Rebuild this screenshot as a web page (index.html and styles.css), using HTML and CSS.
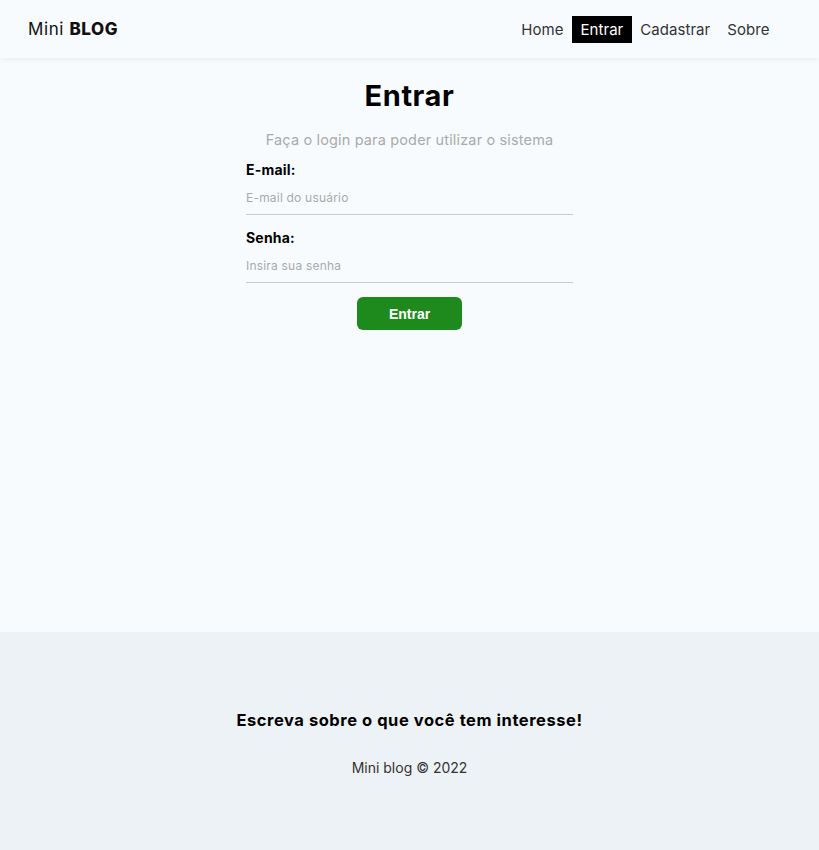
FILE: index.html
```html
<!DOCTYPE html>
<html lang="pt-BR">
<head>
<meta charset="utf-8">
<title>Mini Blog</title>
<link rel="stylesheet" href="styles.css">
</head>
<body>
<div class="app">
  <nav class="navbar">
    <a class="brand" href="#">Mini <span>BLOG</span></a>
    <ul class="links">
      <li><a href="#">Home</a></li>
      <li><a class="active" href="#">Entrar</a></li>
      <li><a href="#">Cadastrar</a></li>
      <li><a href="#">Sobre</a></li>
    </ul>
  </nav>
  <main class="container">
    <div class="login">
      <h1>Entrar</h1>
      <p class="sub">Faça o login para poder utilizar o sistema</p>
      <form class="form">
        <label class="field">
          <span class="label">E-mail:</span>
          <input type="email" placeholder="E-mail do usuário">
        </label>
        <label class="field">
          <span class="label">Senha:</span>
          <input type="password" placeholder="Insira sua senha">
        </label>
        <button type="button" class="btn">Entrar</button>
      </form>
    </div>
  </main>
  <footer class="footer">
    <h3>Escreva sobre o que você tem interesse!</h3>
    <p>Mini blog &copy; 2022</p>
  </footer>
</div>
</body>
</html>
```
FILE: styles.css
```css
* { box-sizing: border-box; }
html, body { margin: 0; padding: 0; }
body {
  font-family: "Inter", "DejaVu Sans", sans-serif;
  background: #f8fbfe;
  color: #000;
}
.app { min-height: 850px; display: flex; flex-direction: column; }
.navbar {
  height: 58px;
  display: flex;
  align-items: center;
  justify-content: space-between;
  padding: 0 41px 0 28px;
  background: #f7fbfe;
  box-shadow: 0 2px 6px rgba(0,0,0,0.06);
  position: relative;
  z-index: 1;
}
.brand {
  font-size: 17px;
  color: #111;
  text-decoration: none;
  letter-spacing: 0.6px;
}
.brand span { font-weight: 800; }
.links { display: flex; list-style: none; margin: 0; padding: 0; gap: 0; }
.links a {
  display: block;
  padding: 5px 8.5px 4px;
  font-size: 15px;
  color: #333;
  text-decoration: none;
  line-height: 18px;
  letter-spacing: 0.05px;
}
.links a.active { background: #000; color: #fff; }
.container {
  height: 574px;
  display: flex;
  justify-content: center;
}
.login { width: 327px; text-align: center; padding-top: 18px; }
.login h1 { margin: 0; font-size: 29px; font-weight: 700; line-height: 40px; letter-spacing: 0.6px; }
.sub { margin: 14px 0 0; color: #aaa; font-size: 14.5px; line-height: 20px; letter-spacing: 0.15px; }
.form { display: flex; flex-direction: column; text-align: left; margin-top: 10px; }
.field { display: flex; flex-direction: column; margin-bottom: 13px; }
.label { font-weight: 700; font-size: 14px; line-height: 20px; letter-spacing: 0.2px; }
.field input {
  border: 0;
  border-bottom: 1px solid #ccc;
  background: transparent;
  padding: 10px 0 9px;
  font-family: inherit;
  font-size: 12px;
  letter-spacing: 0.2px;
  outline: none;
}
.field input::placeholder { color: #aaa; }
.btn {
  align-self: center;
  width: 105px;
  height: 33px;
  margin-top: 1px;
  background: #1e8a1e;
  color: #fff;
  border: 0;
  border-radius: 6px;
  font-family: "Liberation Sans", Arial, sans-serif;
  font-weight: 700;
  font-size: 14px;
}
.footer {
  flex: 1;
  background: #edf2f6;
  display: flex;
  flex-direction: column;
  align-items: center;
  padding-top: 77px;
}
.footer h3 { margin: 0; font-size: 16.5px; font-weight: 700; line-height: 22px; letter-spacing: 0.55px; }
.footer p { margin: 27px 0 0; font-size: 14px; color: #333; line-height: 20px; }
```
